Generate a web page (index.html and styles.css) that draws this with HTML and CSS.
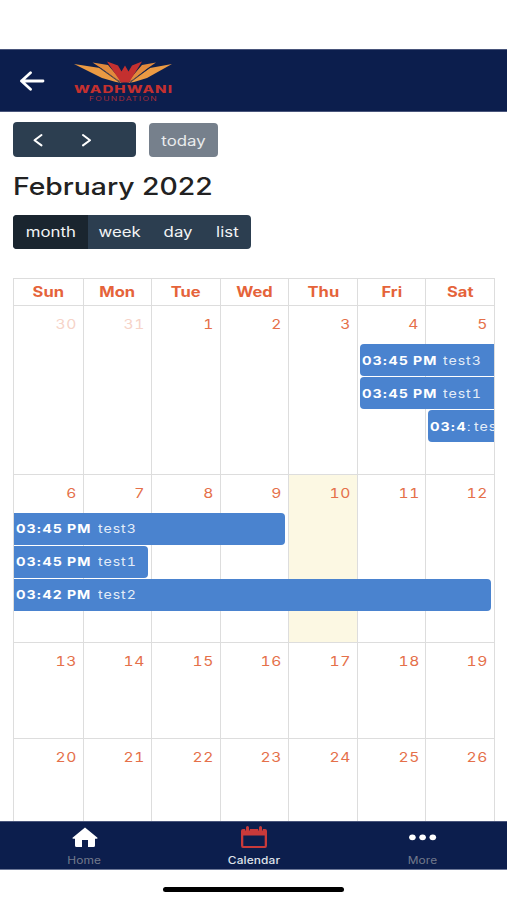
FILE: index.html
```html
<!DOCTYPE html>
<html lang="en">
<head>
<meta charset="utf-8">
<title>Calendar</title>
<link rel="stylesheet" href="styles.css">
</head>
<body>
<header class="topbar">
  <svg class="back" viewBox="0 0 26 20" width="26" height="20"><path d="M24 10H2.500M11.500 1.800L2.500 10l9 8.200" fill="none" stroke="#fff" stroke-width="2.800" stroke-linecap="round" stroke-linejoin="round"/></svg>
  <svg class="logo" viewBox="0 0 104 44" width="104" height="44">
    <path d="M2 4L28 8L50 23L44 22L30 18Z" fill="#eb9a43"/>
    <path d="M100 4L78 8L56 23L62 22L75 18Z" fill="#eb9a43"/>
    <path d="M20.500 2.500L36 5L51 22.500L45 19.500L29 8Z" fill="#e28a3c"/>
    <path d="M84 2.500L70 5L55 22.500L61 19.500L76 8Z" fill="#e28a3c"/>
    <path d="M35 1.500L46 5.500L49.500 11.500L53 5.500L56.500 11.500L60 5.500L70 1.500L57 22.500H49Z" fill="#c4302f"/>
    <path d="M27 7.500L48 22.500M78 7.500L58 22.500" fill="none" stroke="#0c1e4d" stroke-width="0.700"/>
    <text class="logo-name" x="2" y="33" textLength="99" lengthAdjust="spacingAndGlyphs">WADHWANI</text>
    <text class="logo-sub" x="17" y="40.800" textLength="69" lengthAdjust="spacingAndGlyphs">FOUNDATION</text>
  </svg>
</header>
<main class="content">
  <div class="controls">
    <div class="pager">
      <svg viewBox="0 0 10 14" width="10" height="14"><path d="M8.500 2L1.500 7.200L8.500 12.400"/></svg>
      <svg viewBox="0 0 10 14" width="10" height="14"><path d="M2 2L9 7.200L2 12.400"/></svg>
    </div>
    <div class="today-btn"><span class="wide">today</span></div>
  </div>
  <h1><span class="wide">February 2022</span></h1>
  <div class="views">
    <div class="view active"><span class="wide">month</span></div>
    <div class="view week-view"><span class="wide">week</span></div>
    <div class="view day-view"><span class="wide">day</span></div>
    <div class="view list-view"><span class="wide">list</span></div>
  </div>
  <section class="calendar">
    <div class="names">
      <div><span class="wide">Sun</span></div><div><span class="wide">Mon</span></div><div><span class="wide">Tue</span></div><div><span class="wide">Wed</span></div><div><span class="wide">Thu</span></div><div><span class="wide">Fri</span></div><div><span class="wide">Sat</span></div>
    </div>
    <div class="week tall">
      <div class="date c1 other"><span>30</span></div><div class="date c2 other"><span>31</span></div><div class="date c3"><span>1</span></div><div class="date c4"><span>2</span></div><div class="date c5"><span>3</span></div><div class="date c6"><span>4</span></div><div class="date c7"><span>5</span></div>
      <div class="event fri r2 starts"><b>03:45 PM</b><span>test3</span></div>
      <div class="event fri r3 starts"><b>03:45 PM</b><span>test1</span></div>
      <div class="event sat r4 starts"><b class="narrow">03:4<small>:</small></b><span>tes</span></div>
    </div>
    <div class="week tall">
      <div class="date c1"><span>6</span></div><div class="date c2"><span>7</span></div><div class="date c3"><span>8</span></div><div class="date c4"><span>9</span></div><div class="date c5 now"><span>10</span></div><div class="date c6"><span>11</span></div><div class="date c7"><span>12</span></div>
      <div class="event sun-wed r2 ends"><b>03:45 PM</b><span>test3</span></div>
      <div class="event sun-mon r3 ends"><b>03:45 PM</b><span>test1</span></div>
      <div class="event sun-sat r4 ends"><b>03:42 PM</b><span>test2</span></div>
    </div>
    <div class="week short">
      <div class="date c1"><span>13</span></div><div class="date c2"><span>14</span></div><div class="date c3"><span>15</span></div><div class="date c4"><span>16</span></div><div class="date c5"><span>17</span></div><div class="date c6"><span>18</span></div><div class="date c7"><span>19</span></div>
    </div>
    <div class="week short">
      <div class="date c1"><span>20</span></div><div class="date c2"><span>21</span></div><div class="date c3"><span>22</span></div><div class="date c4"><span>23</span></div><div class="date c5"><span>24</span></div><div class="date c6"><span>25</span></div><div class="date c7"><span>26</span></div>
    </div>
  </section>
</main>
<nav class="tabs">
  <div class="tab">
    <svg viewBox="0 0 28 24" width="28" height="24"><path d="M14 2.500L26.500 12.700Q27 13.700 25.500 13.700H24V20.500Q24 22 22.500 22H17V15H11V22H5.500Q4 22 4 20.500V13.700H2.500Q1 13.700 1.500 12.700Z" fill="#fff"/></svg>
    <span class="wide">Home</span>
  </div>
  <div class="tab selected">
    <svg viewBox="0 0 28 24" width="28" height="24"><path d="M3 4H25Q27 4 27 6V20.500Q27 23 25 23H3Q1 23 1 20.500V6Q1 4 3 4ZM3.300 10.500V21H24.700V10.500Z" fill="#c93a3a" fill-rule="evenodd"/><path d="M7.500 2V5.500M20.500 2V5.500" stroke="#0c1e4d" stroke-width="4.600"/><path d="M7.500 2.500V5.800M20.500 2.500V5.800" stroke="#c93a3a" stroke-width="3" stroke-linecap="round"/></svg>
    <span class="wide">Calendar</span>
  </div>
  <div class="tab">
    <svg viewBox="0 0 28 24" width="28" height="24"><g fill="#fff"><ellipse cx="3.400" cy="12.300" rx="3.300" ry="2.900"/><ellipse cx="13.600" cy="12.300" rx="3.300" ry="2.900"/><ellipse cx="23.800" cy="12.300" rx="3.300" ry="2.900"/></g></svg>
    <span class="wide">More</span>
  </div>
</nav>
<footer class="home-area"><div class="home-indicator"></div></footer>
</body>
</html>
```

FILE: styles.css
```css
* { box-sizing: border-box; }
body {
  margin: 0;
  width: 507px;
  height: 900px;
  padding-top: 49px;
  display: flex;
  flex-direction: column;
  overflow: hidden;
  background: #fff;
  font-family: Inter, "Liberation Sans", sans-serif;
  color: #222;
}
.wide { display: inline-block; transform: scaleX(1.2); white-space: nowrap; }
.topbar {
  height: 63px;
  flex: none;
  display: flex;
  background: #0c1e4d;
  border-top: 1px solid #49557b;
  border-bottom: 1px solid #49557b;
}
.back { margin: 21px 0 0 18.5px; }
.logo { margin: 10px 0 0 27.5px; }
.logo-name { font-size: 10px; font-weight: 800; letter-spacing: 0.7px; fill: #c4302f; }
.logo-sub { font-size: 6.5px; letter-spacing: 1px; fill: #a82d38; }
.content { height: 709px; flex: none; padding: 10px 12px 0 13px; overflow: hidden; }
.controls { display: flex; gap: 13px; height: 36px; }
.pager {
  width: 123px;
  height: 35px;
  display: flex;
  gap: 38px;
  padding: 11px 0 0 20px;
  border-radius: 4px;
  background: #2c3e50;
}
.pager svg { fill: none; stroke: #fff; stroke-width: 2; stroke-linecap: round; stroke-linejoin: round; }
.today-btn {
  width: 69px;
  height: 34px;
  margin-top: 1px;
  border-radius: 4px;
  background: #76808c;
  color: #e9ebed;
  font-size: 14px;
  line-height: 35px;
  text-align: center;
}
h1 { margin: 12px 0 0; height: 34px; font-size: 24px; line-height: 34px; font-weight: 500; }
h1 .wide { transform: scaleX(1.18); transform-origin: 0 50%; }
.views {
  width: 238px;
  height: 34px;
  margin-top: 11px;
  display: flex;
  border-radius: 4px;
  overflow: hidden;
  background: #2c3e50;
  color: #f2f4f5;
  font-size: 14px;
  line-height: 33px;
  text-align: center;
}
.active { width: 75px; background: #1a252f; }
.week-view { width: 63px; }
.day-view { width: 54px; }
.list-view { width: 44px; }
.calendar { margin-top: 29px; border: 1px solid #ddd; }
.names, .week { display: grid; grid-template-columns: repeat(7, minmax(0, 1fr)); }
.names {
  height: 26px;
  line-height: 26px;
  font-size: 14px;
  font-weight: 700;
  text-align: center;
  color: #e5633a;
}
.names .wide { transform: scaleX(1.18); }
.names div + div, .date + .date { border-left: 1px solid #ddd; }
.week { border-top: 1px solid #ddd; }
.tall { height: 168.5px; grid-template-rows: 38px 33px 33px 33px 1fr; }
.short { height: 95.5px; grid-template-rows: 1fr; }
.date {
  grid-row: 1 / -1;
  padding: 9px 6px 0 0;
  text-align: right;
  font-size: 13px;
  line-height: 18px;
  letter-spacing: 0.5px;
  font-variant-numeric: tabular-nums;
  color: #e5704a;
}
.date span { display: inline-block; transform: scaleX(1.2); transform-origin: 100% 50%; }
.other { color: #f6d3c8; }
.now { background: #fcf8e3; }
.c1 { grid-column: 1; }
.c2 { grid-column: 2; }
.c3 { grid-column: 3; }
.c4 { grid-column: 4; }
.c5 { grid-column: 5; }
.c6 { grid-column: 6; }
.c7 { grid-column: 7; }
.event {
  z-index: 1;
  height: 32px;
  display: flex;
  align-items: center;
  padding-left: 2px;
  overflow: hidden;
  background: #4a83cf;
  color: #fff;
  font-size: 12px;
  letter-spacing: 0.8px;
  white-space: nowrap;
}
.event b { flex: none; width: 81.5px; transform: scaleX(1.18); transform-origin: 0 50%; }
.event b.narrow { width: 43.5px; }
.event small { font-size: 12px; font-weight: 300; }
.event span { color: #e4edf8; transform: scaleX(1.18); transform-origin: 0 50%; font-variant-numeric: tabular-nums; }
.r2 { grid-row: 2; }
.r3 { grid-row: 3; }
.r4 { grid-row: 4; }
.fri { grid-column: 6 / 8; }
.sat { grid-column: 7; }
.sun-wed { grid-column: 1 / 5; }
.sun-mon { grid-column: 1 / 3; }
.sun-sat { grid-column: 1 / 8; }
.starts { margin-left: 3px; border-radius: 4px 0 0 4px; }
.ends { margin-right: 3px; border-radius: 0 4px 4px 0; }
.tabs {
  height: 49px;
  flex: none;
  display: flex;
  background: #0c1e4d;
  border-top: 1px solid #49557b;
  border-bottom: 1px solid #6d7898;
}
.tab {
  flex: 1;
  padding-top: 3px;
  display: flex;
  flex-direction: column;
  align-items: center;
  font-size: 10px;
  line-height: 14px;
  letter-spacing: 0.1px;
  color: #737a8c;
}
.tab span { margin-top: 4px; }
.tab .wide { transform: scaleX(1.19); }
.selected { color: #dfe2ea; font-weight: 500; }
.home-area { height: 30px; display: flex; justify-content: center; }
.home-indicator { width: 181px; height: 5px; margin-top: 17px; border-radius: 3px; background: #000; }
```
